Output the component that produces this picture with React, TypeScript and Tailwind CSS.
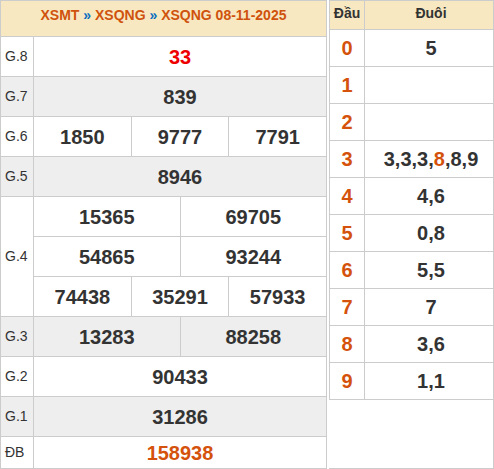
import React from "react";

const ORANGE = "text-[#d4520c]";

function Row({
  label,
  h = "h-[40px]",
  bg = "bg-white",
  children,
}: {
  label: string;
  h?: string;
  bg?: string;
  children: React.ReactNode;
}) {
  return (
    <div className={`flex ${h} ${bg} border-b border-[#cccccc]`}>
      <div className="w-[33px] shrink-0 border-r border-[#cccccc] flex items-center pl-[4px] text-[14px] text-[#333333]">
        {label}
      </div>
      <div className="flex-1 flex">{children}</div>
    </div>
  );
}

function Cells({ values, color = "text-[#333333]" }: { values: string[]; color?: string }) {
  return (
    <>
      {values.map((v, i) => (
        <div
          key={i}
          className={`flex-1 basis-0 flex items-center justify-center text-[20px] font-bold ${color} ${
            i < values.length - 1 ? "border-r border-[#cccccc]" : ""
          }`}
        >
          {v}
        </div>
      ))}
    </>
  );
}

export default function App() {
  const tails: { d: string; t: React.ReactNode }[] = [
    { d: "0", t: "5" },
    { d: "1", t: "" },
    { d: "2", t: "" },
    {
      d: "3",
      t: (
        <>
          3,3,3,<span className={ORANGE}>8</span>,8,9
        </>
      ),
    },
    { d: "4", t: "4,6" },
    { d: "5", t: "0,8" },
    { d: "6", t: "5,5" },
    { d: "7", t: "7" },
    { d: "8", t: "3,6" },
    { d: "9", t: "1,1" },
  ];

  return (
    <div
      className="flex w-[494px] h-[469px] bg-white gap-[2px]"
      style={{ fontFamily: '"Liberation Sans", Arial, sans-serif' }}
    >
      {/* Left results table */}
      <div className="w-[327px] shrink-0 border-l border-t border-r border-[#cccccc] flex flex-col">
        <div className="h-[36px] bg-[#f8e8c1] border-b border-[#cccccc] flex justify-center pt-[4px] leading-[20px] text-[14px] font-bold text-[#cf520d]">
          <span>
            XSMT <span className="text-[#0c6fc0]">»</span> XSQNG{" "}
            <span className="text-[#0c6fc0]">»</span> XSQNG 08-11-2025
          </span>
        </div>
        <Row label="G.8">
          <Cells values={["33"]} color="text-[#ee0000]" />
        </Row>
        <Row label="G.7" bg="bg-[#eeeeee]">
          <Cells values={["839"]} />
        </Row>
        <Row label="G.6">
          <Cells values={["1850", "9777", "7791"]} />
        </Row>
        <Row label="G.5" bg="bg-[#eeeeee]">
          <Cells values={["8946"]} />
        </Row>
        <div className="flex h-[120px] border-b border-[#cccccc]">
          <div className="w-[33px] shrink-0 border-r border-[#cccccc] flex items-center pl-[4px] text-[14px] text-[#333333]">
            G.4
          </div>
          <div className="flex-1 flex flex-col">
            <div className="h-[40px] flex border-b border-[#cccccc]">
              <Cells values={["15365", "69705"]} />
            </div>
            <div className="h-[40px] flex border-b border-[#cccccc]">
              <Cells values={["54865", "93244"]} />
            </div>
            <div className="h-[39px] flex">
              <Cells values={["74438", "35291", "57933"]} />
            </div>
          </div>
        </div>
        <Row label="G.3" bg="bg-[#eeeeee]">
          <Cells values={["13283", "88258"]} />
        </Row>
        <Row label="G.2">
          <Cells values={["90433"]} />
        </Row>
        <Row label="G.1" bg="bg-[#eeeeee]">
          <Cells values={["31286"]} />
        </Row>
        <Row label="ĐB" h="h-[32px]">
          <Cells values={["158938"]} color="text-[#d4520c]" />
        </Row>
      </div>

      {/* Right head/tail table */}
      <div className="w-[165px] shrink-0 border-r border-b border-[#cccccc] flex flex-col">
        <div className="border-l border-t border-[#cccccc] flex flex-col">
          <div className="h-[29px] flex bg-[#f8e8c1] border-b border-[#cccccc] text-[14px] font-bold text-[#333333] leading-[20px]">
            <div className="w-[35px] shrink-0 border-r border-[#cccccc] flex justify-center pt-[2px]">
              Đầu
            </div>
            <div className="flex-1 flex justify-center pt-[2px] pl-[4px]">Đuôi</div>
          </div>
          {tails.map((r) => (
            <div key={r.d} className="h-[37px] flex border-b border-[#cccccc]">
              <div
                className={`w-[35px] shrink-0 border-r border-[#cccccc] flex items-center justify-center text-[20px] font-bold ${ORANGE}`}
              >
                {r.d}
              </div>
              <div className="flex-1 flex items-center justify-center pl-[4px] text-[20px] font-bold text-[#333333]">
                {r.t}
              </div>
            </div>
          ))}
        </div>
      </div>
    </div>
  );
}
